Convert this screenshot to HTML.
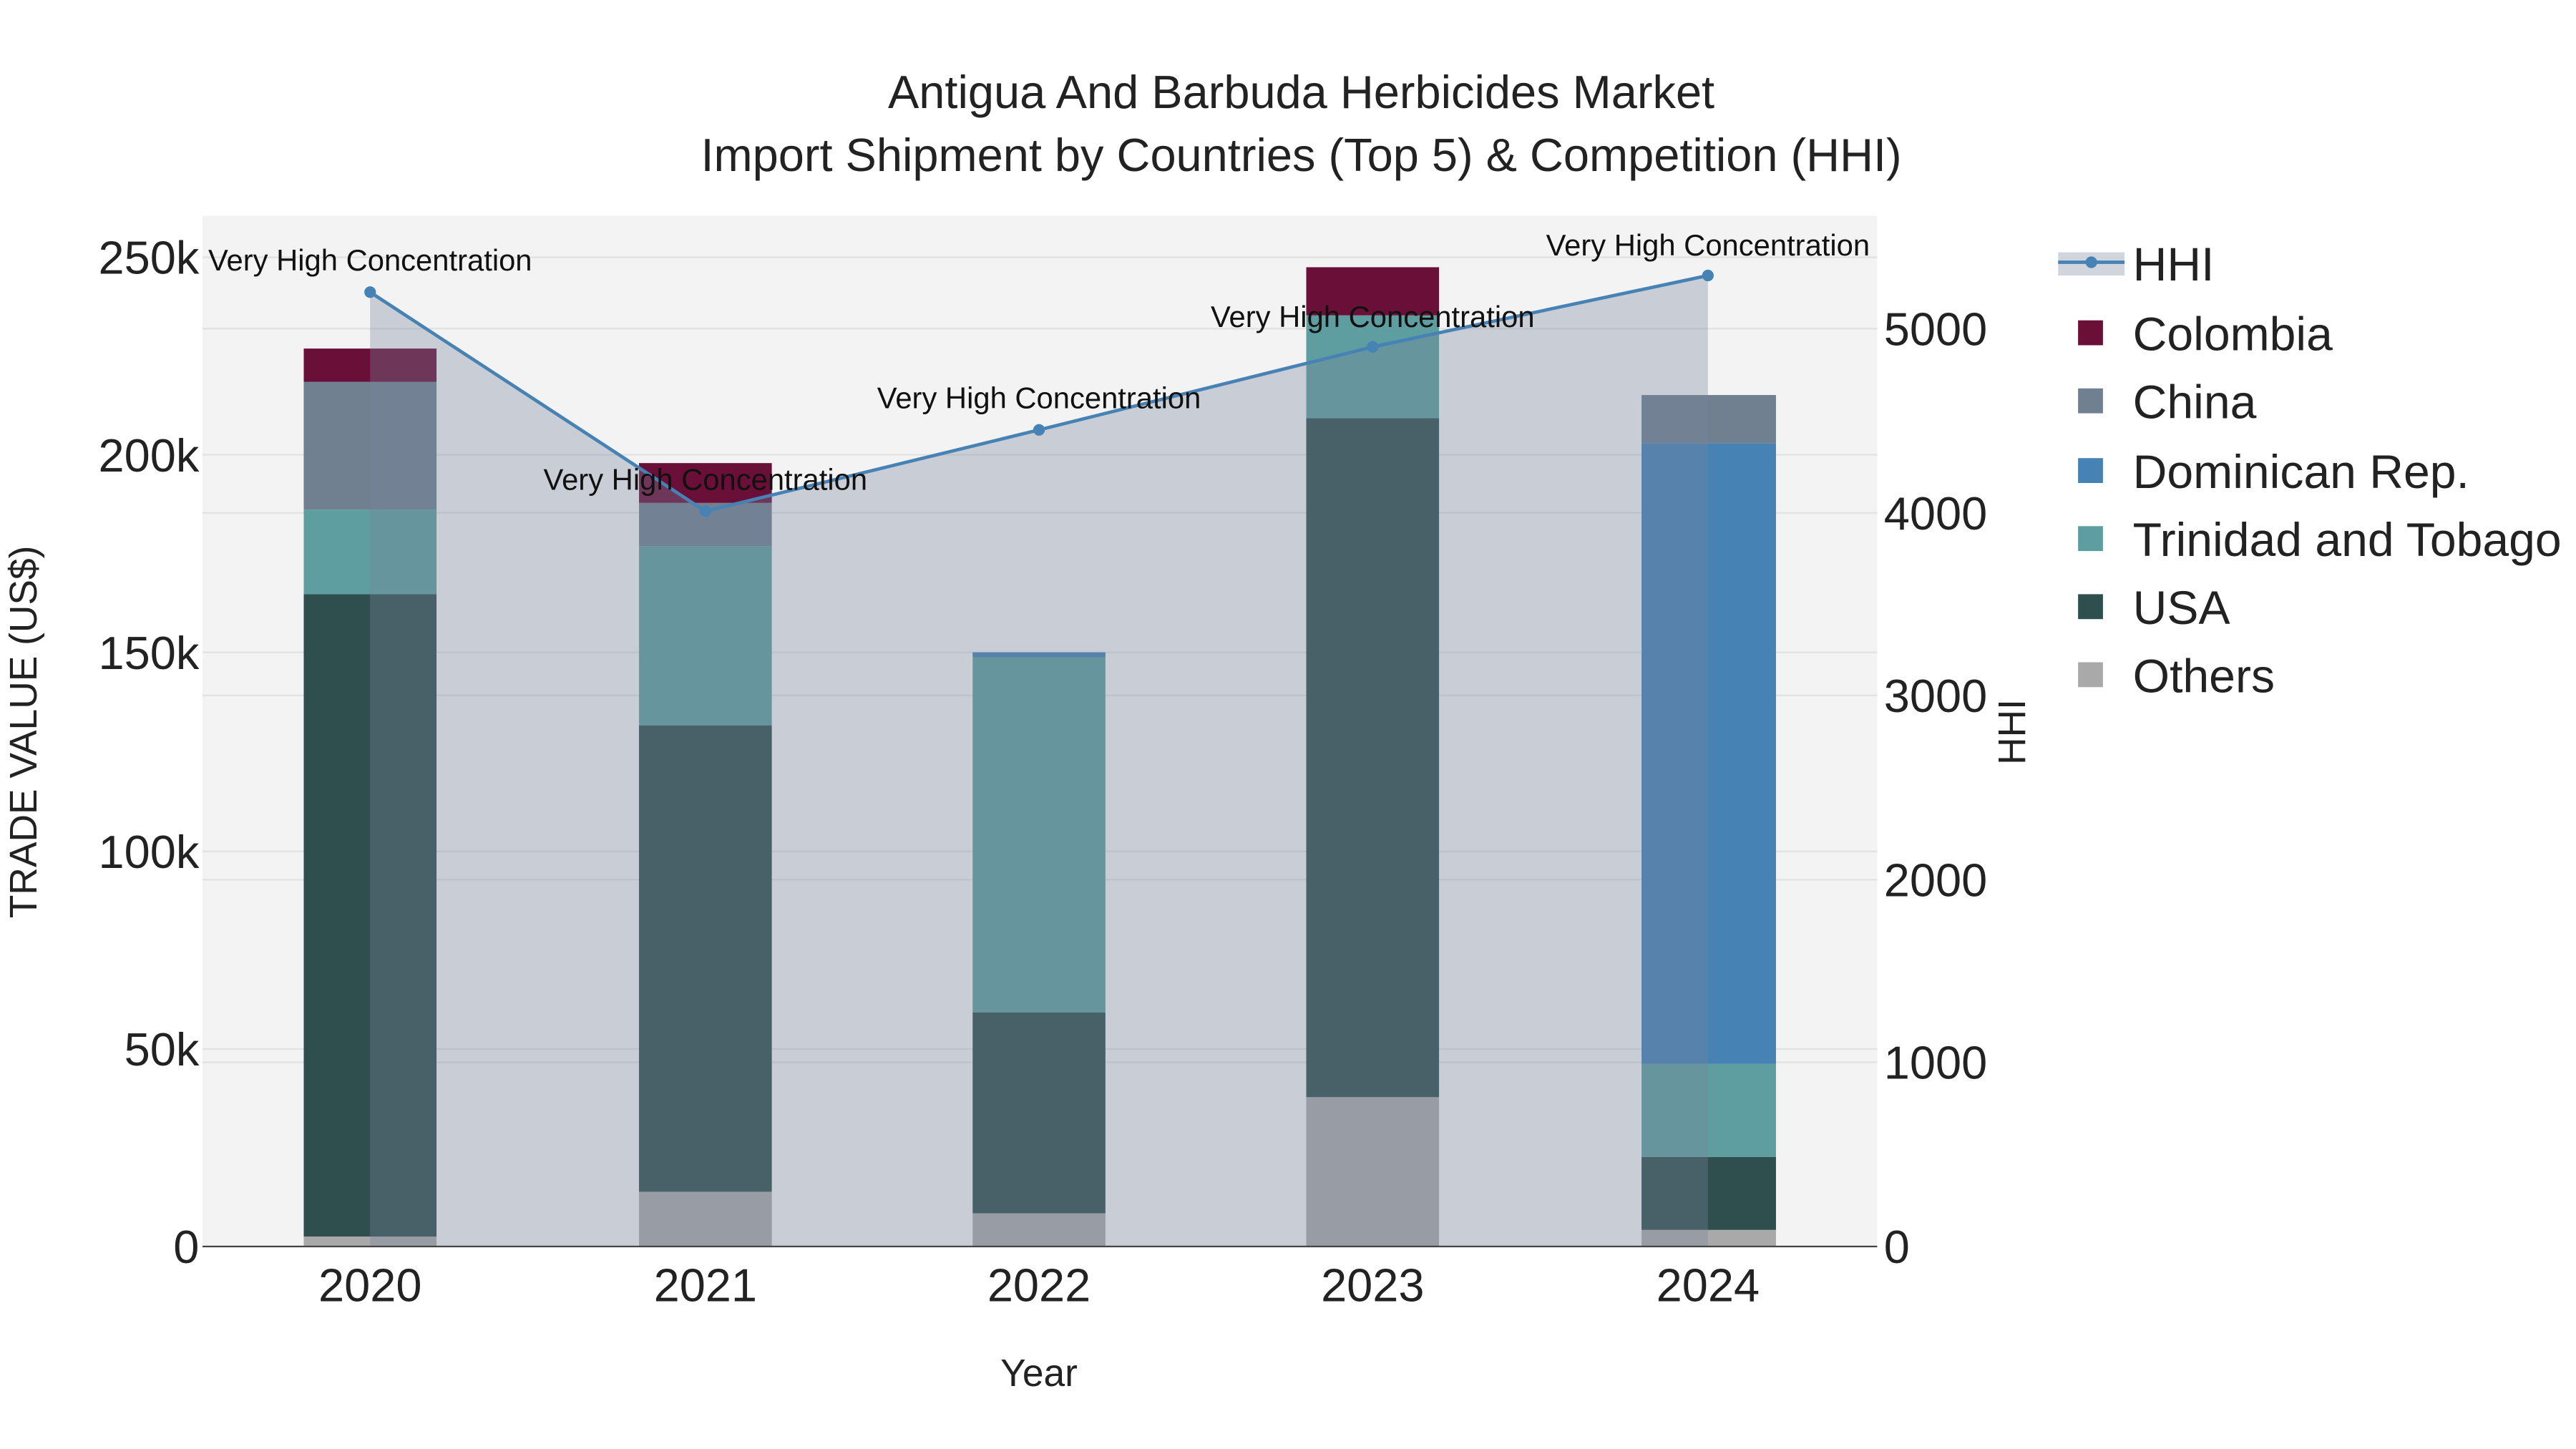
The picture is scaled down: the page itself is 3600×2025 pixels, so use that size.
<!DOCTYPE html>
<html><head><meta charset="utf-8"><style>html,body{margin:0;padding:0;background:#fff}svg{display:block}</style></head>
<body>
<svg width="3600" height="2025" viewBox="0 0 1552 873" xmlns="http://www.w3.org/2000/svg" font-family="Liberation Sans, sans-serif">
<rect x="0" y="0" width="1552" height="873" fill="#fff"/>
<rect x="122" y="130" width="1009" height="621" fill="#f3f3f3"/>
<g stroke="#e2e2e2" stroke-width="1">
<line x1="122" x2="1131" y1="155" y2="155"/><line x1="122" x2="1131" y1="274" y2="274"/><line x1="122" x2="1131" y1="393" y2="393"/><line x1="122" x2="1131" y1="513" y2="513"/><line x1="122" x2="1131" y1="632" y2="632"/>
<line x1="122" x2="1131" y1="198" y2="198"/><line x1="122" x2="1131" y1="309" y2="309"/><line x1="122" x2="1131" y1="419" y2="419"/><line x1="122" x2="1131" y1="530" y2="530"/><line x1="122" x2="1131" y1="640" y2="640"/>
</g>
<rect x="183" y="745" width="80" height="6" fill="#a9a9a9"/>
<rect x="183" y="358" width="80" height="387" fill="#2f4f4f"/>
<rect x="183" y="307" width="80" height="51" fill="#5f9ea0"/>
<rect x="183" y="230" width="80" height="77" fill="#708090"/>
<rect x="183" y="210" width="80" height="20" fill="#6a1038"/>
<rect x="385" y="718" width="80" height="33" fill="#a9a9a9"/>
<rect x="385" y="437" width="80" height="281" fill="#2f4f4f"/>
<rect x="385" y="329" width="80" height="108" fill="#5f9ea0"/>
<rect x="385" y="303" width="80" height="26" fill="#708090"/>
<rect x="385" y="279" width="80" height="24" fill="#6a1038"/>
<rect x="586" y="731" width="80" height="20" fill="#a9a9a9"/>
<rect x="586" y="610" width="80" height="121" fill="#2f4f4f"/>
<rect x="586" y="396" width="80" height="214" fill="#5f9ea0"/>
<rect x="586" y="393" width="80" height="3" fill="#4682b4"/>
<rect x="787" y="661" width="80" height="90" fill="#a9a9a9"/>
<rect x="787" y="252" width="80" height="409" fill="#2f4f4f"/>
<rect x="787" y="190" width="80" height="62" fill="#5f9ea0"/>
<rect x="787" y="161" width="80" height="29" fill="#6a1038"/>
<rect x="989" y="741" width="81" height="10" fill="#a9a9a9"/>
<rect x="989" y="697" width="81" height="44" fill="#2f4f4f"/>
<rect x="989" y="641" width="81" height="56" fill="#5f9ea0"/>
<rect x="989" y="267" width="81" height="374" fill="#4682b4"/>
<rect x="989" y="238" width="81" height="29" fill="#708090"/>
<polygon points="223,176 425,308 626,259 827,209 1029,166 1029,751 223,751" fill="rgba(120,132,155,0.34)"/>
<polyline points="223,176 425,308 626,259 827,209 1029,166" fill="none" stroke="#4682b4" stroke-width="2"/>
<g fill="#4682b4"><circle cx="223" cy="176" r="3.5"/><circle cx="425" cy="308" r="3.5"/><circle cx="626" cy="259" r="3.5"/><circle cx="827" cy="209" r="3.5"/><circle cx="1029" cy="166" r="3.5"/></g>
<line x1="122" x2="1131" y1="751" y2="751" stroke="#444" stroke-width="1"/>
<g font-size="18" fill="#111" text-anchor="middle">
<text x="223" y="163">Very High Concentration</text>
<text x="425" y="295">Very High Concentration</text>
<text x="626" y="246">Very High Concentration</text>
<text x="827" y="197">Very High Concentration</text>
<text x="1029" y="154">Very High Concentration</text>
</g>
<g font-size="28" fill="#222" text-anchor="middle">
<text x="784" y="65">Antigua And Barbuda Herbicides Market</text>
<text x="784" y="103">Import Shipment by Countries (Top 5) &amp; Competition (HHI)</text>
</g>
<g font-size="28" fill="#222" text-anchor="end">
<text x="120" y="165">250k</text><text x="120" y="284">200k</text><text x="120" y="403">150k</text><text x="120" y="523">100k</text><text x="120" y="642">50k</text><text x="120" y="761">0</text>
</g>
<g font-size="28" fill="#222" text-anchor="start">
<text x="1135" y="208">5000</text><text x="1135" y="319">4000</text><text x="1135" y="429">3000</text><text x="1135" y="540">2000</text><text x="1135" y="650">1000</text><text x="1135" y="761">0</text>
</g>
<g font-size="28" fill="#222" text-anchor="middle">
<text x="223" y="784">2020</text><text x="425" y="784">2021</text><text x="626" y="784">2022</text><text x="827" y="784">2023</text><text x="1029" y="784">2024</text>
</g>
<text x="626" y="835" font-size="23" fill="#222" text-anchor="middle">Year</text>
<text transform="translate(22,441) rotate(-90)" font-size="23" fill="#222" text-anchor="middle">TRADE VALUE (US$)</text>
<text transform="translate(1220,441) rotate(-90)" font-size="23" fill="#222" text-anchor="middle">HHI</text>
<rect x="1240" y="152" width="40" height="14" fill="rgba(120,132,155,0.34)"/>
<line x1="1240" x2="1280" y1="158" y2="158" stroke="#4682b4" stroke-width="2"/>
<circle cx="1260" cy="158" r="3.5" fill="#4682b4"/>
<rect x="1252" y="193" width="15" height="15" fill="#6a1038"/>
<rect x="1252" y="234" width="15" height="15" fill="#708090"/>
<rect x="1252" y="276" width="15" height="15" fill="#4682b4"/>
<rect x="1252" y="317" width="15" height="15" fill="#5f9ea0"/>
<rect x="1252" y="358" width="15" height="15" fill="#2f4f4f"/>
<rect x="1252" y="399" width="15" height="15" fill="#a9a9a9"/>
<g font-size="28.5" fill="#222">
<text x="1285" y="169">HHI</text><text x="1285" y="211">Colombia</text><text x="1285" y="252">China</text><text x="1285" y="294">Dominican Rep.</text><text x="1285" y="335">Trinidad and Tobago</text><text x="1285" y="376">USA</text><text x="1285" y="417">Others</text>
</g>
</svg>
</body></html>
